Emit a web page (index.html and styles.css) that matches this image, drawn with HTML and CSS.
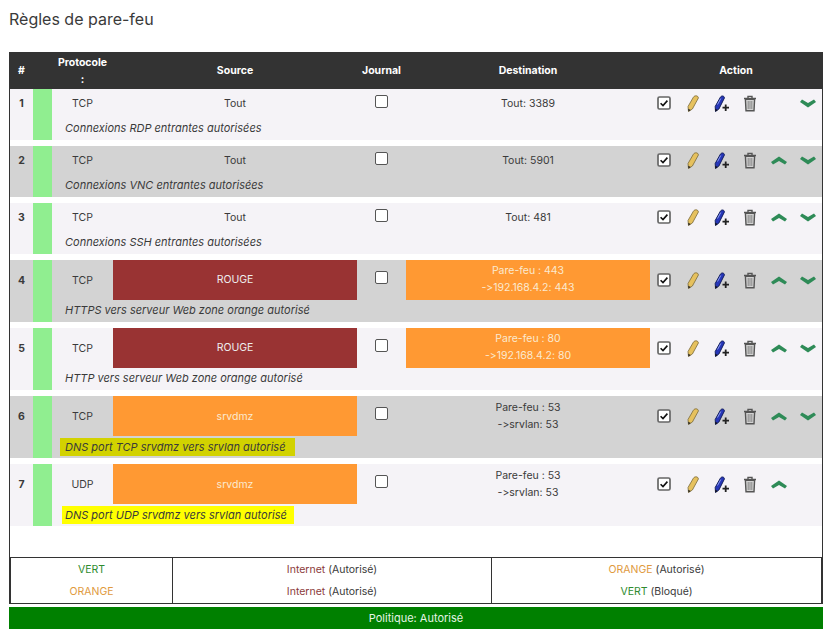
FILE: index.html
```html
<!DOCTYPE html>
<html lang="fr">
<head>
  <meta charset="UTF-8" />
  <title>Règles de pare-feu</title>
  <link rel="stylesheet" href="styles.css">
</head>
<body>
  <svg class="sprite" width="0" height="0">
    <symbol id="i-check" viewBox="0 0 14 14">
      <rect x="1" y="1" width="12" height="12" rx="1.5" fill="#fff" stroke="#666" stroke-width="1.7"/>
      <path d="M3.6 7.2l2.4 2.4 4.4-5" fill="none" stroke="#111" stroke-width="1.6"/>
    </symbol>
    <symbol id="i-pencil" viewBox="0 0 12 17">
      <path d="M6.500 2C7.600 .4 11.200 .2 11.400 3L5.400 14 1.500 16.500 1 11.500z" fill="#e6c15e" stroke="#7a6a3a" stroke-width=".8"/>
      <path d="M1.200 13.800l.3 2.700 2.200-1.500z" fill="#222"/>
    </symbol>
    <symbol id="i-addpen" viewBox="0 0 16 17">
      <path d="M6.500 2C7.500 .6 10.200 .4 10.400 3L4.900 14 1.500 16.500 1.200 11.500z" fill="#2636b8" stroke="#14205e" stroke-width="1"/>
      <path d="M6.800 3.500L3.500 9.500" stroke="#8f9df0" stroke-width="1"/>
      <path d="M1.300 13.800l.2 2.700 2.200-1.500z" fill="#111"/>
      <path d="M11.700 9.500v6.500M8.500 12.700h6.500" stroke="#222" stroke-width="1.800"/>
    </symbol>
    <symbol id="i-trash" viewBox="0 0 14 17">
      <path d="M1 3.500h12M5 3.200V1.400h4v1.800" fill="none" stroke="#555" stroke-width="1.400"/>
      <path d="M2.400 4.200h9.200l-.6 11.600H3z" fill="#d2d2d2" stroke="#555" stroke-width="1.400"/>
      <path d="M5.200 6v8M7 6v8M8.800 6v8" stroke="#888" stroke-width="1"/>
    </symbol>
    <symbol id="i-up" viewBox="0 0 16 9">
      <path d="M8 .5L16 6 14 8.500 8 5 2 8.500 0 6z" fill="#2e8b57"/>
    </symbol>
    <symbol id="i-down" viewBox="0 0 16 9">
      <path d="M8 8.500L16 3 14 .5 8 4 2 .5 0 3z" fill="#2e8b57"/>
    </symbol>
  </svg>

  <h2 class="page-title">Règles de pare-feu</h2>

  <div class="rules">
    <div class="rules-head">
      <div>#</div>
      <div></div>
      <div>Protocole<br>:</div>
      <div>Source</div>
      <div>Journal</div>
      <div>Destination</div>
      <div>Action</div>
    </div>

    <div class="rules-body">
      <div class="rule">
        <div class="rule-num">1</div>
        <div class="rule-state"></div>
        <div class="cell">TCP</div>
        <div class="cell">Tout</div>
        <div class="cell-log"><input type="checkbox"></div>
        <div class="cell">Tout: 3389</div>
        <div class="actions">
          <svg class="ico-check"><use href="#i-check"/></svg>
          <svg class="ico-pencil"><use href="#i-pencil"/></svg>
          <svg class="ico-addpen"><use href="#i-addpen"/></svg>
          <svg class="ico-trash"><use href="#i-trash"/></svg>
          <span></span>
          <svg class="ico-arrow"><use href="#i-down"/></svg>
        </div>
        <div class="remark"><span>Connexions RDP entrantes autorisées</span></div>
      </div>

      <div class="rule even">
        <div class="rule-num">2</div>
        <div class="rule-state"></div>
        <div class="cell">TCP</div>
        <div class="cell">Tout</div>
        <div class="cell-log"><input type="checkbox"></div>
        <div class="cell">Tout: 5901</div>
        <div class="actions">
          <svg class="ico-check"><use href="#i-check"/></svg>
          <svg class="ico-pencil"><use href="#i-pencil"/></svg>
          <svg class="ico-addpen"><use href="#i-addpen"/></svg>
          <svg class="ico-trash"><use href="#i-trash"/></svg>
          <svg class="ico-arrow"><use href="#i-up"/></svg>
          <svg class="ico-arrow"><use href="#i-down"/></svg>
        </div>
        <div class="remark"><span>Connexions VNC entrantes autorisées</span></div>
      </div>

      <div class="rule">
        <div class="rule-num">3</div>
        <div class="rule-state"></div>
        <div class="cell">TCP</div>
        <div class="cell">Tout</div>
        <div class="cell-log"><input type="checkbox"></div>
        <div class="cell">Tout: 481</div>
        <div class="actions">
          <svg class="ico-check"><use href="#i-check"/></svg>
          <svg class="ico-pencil"><use href="#i-pencil"/></svg>
          <svg class="ico-addpen"><use href="#i-addpen"/></svg>
          <svg class="ico-trash"><use href="#i-trash"/></svg>
          <svg class="ico-arrow"><use href="#i-up"/></svg>
          <svg class="ico-arrow"><use href="#i-down"/></svg>
        </div>
        <div class="remark"><span>Connexions SSH entrantes autorisées</span></div>
      </div>

      <div class="rule tall even">
        <div class="rule-num">4</div>
        <div class="rule-state"></div>
        <div class="cell">TCP</div>
        <div class="cell red">ROUGE</div>
        <div class="cell-log"><input type="checkbox"></div>
        <div class="cell orange nat">Pare-feu : 443<br>-&gt;192.168.4.2: 443</div>
        <div class="actions">
          <svg class="ico-check"><use href="#i-check"/></svg>
          <svg class="ico-pencil"><use href="#i-pencil"/></svg>
          <svg class="ico-addpen"><use href="#i-addpen"/></svg>
          <svg class="ico-trash"><use href="#i-trash"/></svg>
          <svg class="ico-arrow"><use href="#i-up"/></svg>
          <svg class="ico-arrow"><use href="#i-down"/></svg>
        </div>
        <div class="remark"><span>HTTPS vers serveur Web zone orange autorisé</span></div>
      </div>

      <div class="rule tall">
        <div class="rule-num">5</div>
        <div class="rule-state"></div>
        <div class="cell">TCP</div>
        <div class="cell red">ROUGE</div>
        <div class="cell-log"><input type="checkbox"></div>
        <div class="cell orange nat">Pare-feu : 80<br>-&gt;192.168.4.2: 80</div>
        <div class="actions">
          <svg class="ico-check"><use href="#i-check"/></svg>
          <svg class="ico-pencil"><use href="#i-pencil"/></svg>
          <svg class="ico-addpen"><use href="#i-addpen"/></svg>
          <svg class="ico-trash"><use href="#i-trash"/></svg>
          <svg class="ico-arrow"><use href="#i-up"/></svg>
          <svg class="ico-arrow"><use href="#i-down"/></svg>
        </div>
        <div class="remark"><span>HTTP vers serveur Web zone orange autorisé</span></div>
      </div>

      <div class="rule tall even">
        <div class="rule-num">6</div>
        <div class="rule-state"></div>
        <div class="cell">TCP</div>
        <div class="cell orange">srvdmz</div>
        <div class="cell-log"><input type="checkbox"></div>
        <div class="cell">Pare-feu : 53<br>-&gt;srvlan: 53</div>
        <div class="actions">
          <svg class="ico-check"><use href="#i-check"/></svg>
          <svg class="ico-pencil"><use href="#i-pencil"/></svg>
          <svg class="ico-addpen"><use href="#i-addpen"/></svg>
          <svg class="ico-trash"><use href="#i-trash"/></svg>
          <svg class="ico-arrow"><use href="#i-up"/></svg>
          <svg class="ico-arrow"><use href="#i-down"/></svg>
        </div>
        <div class="remark"><span class="mark-dim">DNS port TCP srvdmz vers srvlan autorisé</span></div>
      </div>

      <div class="rule tall">
        <div class="rule-num">7</div>
        <div class="rule-state"></div>
        <div class="cell">UDP</div>
        <div class="cell orange">srvdmz</div>
        <div class="cell-log"><input type="checkbox"></div>
        <div class="cell">Pare-feu : 53<br>-&gt;srvlan: 53</div>
        <div class="actions">
          <svg class="ico-check"><use href="#i-check"/></svg>
          <svg class="ico-pencil"><use href="#i-pencil"/></svg>
          <svg class="ico-addpen"><use href="#i-addpen"/></svg>
          <svg class="ico-trash"><use href="#i-trash"/></svg>
          <svg class="ico-arrow"><use href="#i-up"/></svg>
          <span></span>
        </div>
        <div class="remark"><span class="mark-bright">DNS port UDP srvdmz vers srvlan autorisé</span></div>
      </div>
    </div>

    <table class="policy-table">
      <tr>
        <td class="col-a txt-green">VERT</td>
        <td class="col-b"><span class="txt-red">Internet</span> (Autorisé)</td>
        <td><span class="txt-orange">ORANGE</span> (Autorisé)</td>
      </tr>
      <tr>
        <td class="col-a txt-orange">ORANGE</td>
        <td class="col-b"><span class="txt-red">Internet</span> (Autorisé)</td>
        <td><span class="txt-green">VERT</span> (Bloqué)</td>
      </tr>
    </table>
  </div>

  <div class="policy-bar">Politique: Autorisé</div>
</body>
</html>
```

FILE: styles.css
```css
:root {
  --text: #3a3a3a;
  --head: #333;
  --odd: #f5f3f7;
  --even: #d3d3d3;
  --allow: #90ee90;
  --red: #993333;
  --orange: #ff9933;
  --columns: 23px 19px 61px 244px 49px 244px 172px;
}

* {
  box-sizing: border-box;
}

body {
  margin: 0;
  padding: 0 14px 0 9px;
  background: #fff;
  color: var(--text);
  font-family: Inter, "Noto Sans", sans-serif;
  font-size: 10.5px;
  font-variant-ligatures: none;
  font-feature-settings: "calt" 0;
}

.sprite {
  position: absolute;
}

.page-title {
  margin: 0;
  padding-top: 7px;
  height: 52px;
  font-size: 16px;
  line-height: 24px;
  font-weight: 400;
}

.rules {
  width: 814px;
  border-left: 1px solid var(--head);
  border-right: 1px solid var(--head);
}

.rules-head {
  display: grid;
  grid-template-columns: var(--columns);
  height: 37px;
  margin: 0 -1px;
  padding: 0 1px;
  background: var(--head);
  color: #fff;
  font-weight: 700;
  font-size: 10.5px;
  line-height: 17px;
  text-align: center;
  align-items: center;
}

.rules-body {
  display: flex;
  flex-direction: column;
  gap: 6px;
  padding-bottom: 31px;
}

.rule {
  display: grid;
  grid-template-columns: var(--columns);
  grid-template-rows: 28px 23px;
  background: var(--odd);
}

.rule.tall {
  grid-template-rows: 40px 22px;
}

.rule.even {
  background: var(--even);
}

.rule-num {
  display: flex;
  align-items: center;
  justify-content: center;
  font-weight: 700;
}

.rule-state {
  grid-row: 1 / 3;
  grid-column: 2;
  background: var(--allow);
}

.cell {
  display: flex;
  align-items: center;
  justify-content: center;
  text-align: center;
  line-height: 17px;
}

.cell.red {
  background: var(--red);
  color: #eee;
  padding-bottom: 2px;
}

.cell.orange {
  background: var(--orange);
  color: #fbe9d0;
}

.cell.nat {
  padding-bottom: 2px;
}

.cell-log {
  display: flex;
  align-items: center;
  justify-content: center;
  padding-bottom: 4px;
}

.rule.tall .cell-log {
  padding-bottom: 6px;
}

.cell-log input {
  appearance: none;
  width: 13px;
  height: 13px;
  margin: 0;
  background: #fff;
  border: 1.5px solid #555;
  border-radius: 2px;
}

.actions {
  display: grid;
  grid-template-columns: repeat(6, 1fr);
  align-items: center;
  justify-items: center;
}

.ico-check {
  width: 14px;
  height: 14px;
}

.ico-pencil {
  width: 12px;
  height: 17px;
}

.ico-addpen {
  width: 16px;
  height: 17px;
}

.ico-trash {
  width: 14px;
  height: 17px;
}

.ico-arrow {
  width: 16px;
  height: 9px;
}

.remark {
  grid-column: 3 / 8;
  padding-top: 2px;
  padding-left: 13px;
  font-style: italic;
  font-size: 11px;
  line-height: 18px;
}

.rule.tall .remark {
  padding-top: 1px;
}

.remark span {
  display: inline-block;
}

.mark-dim {
  margin-top: 1px;
  margin-left: -5px;
  padding: 0 10px 0 5px;
  background: #d2d200;
}

.mark-bright {
  margin-top: 1px;
  margin-left: -3px;
  padding: 0 7px 0 3px;
  background: #ffff00;
}

.policy-table {
  width: 812px;
  height: 47px;
  border-collapse: collapse;
  border: 1px solid var(--head);
  table-layout: fixed;
  background: #fff;
  text-align: center;
}

.policy-table td {
  padding: 0;
  height: 23px;
}

.col-a {
  width: 162px;
  border-right: 1px solid var(--head);
}

.col-b {
  width: 319px;
  border-right: 1px solid var(--head);
}

.txt-green {
  color: #2e8b2e;
}

.txt-red {
  color: #8b3a3a;
}

.txt-orange {
  color: #e09a3e;
}

.policy-bar {
  width: 814px;
  height: 22px;
  margin-top: 3px;
  background: #008000;
  color: #e6f5e6;
  font-size: 11px;
  text-align: center;
  line-height: 22px;
}
```
